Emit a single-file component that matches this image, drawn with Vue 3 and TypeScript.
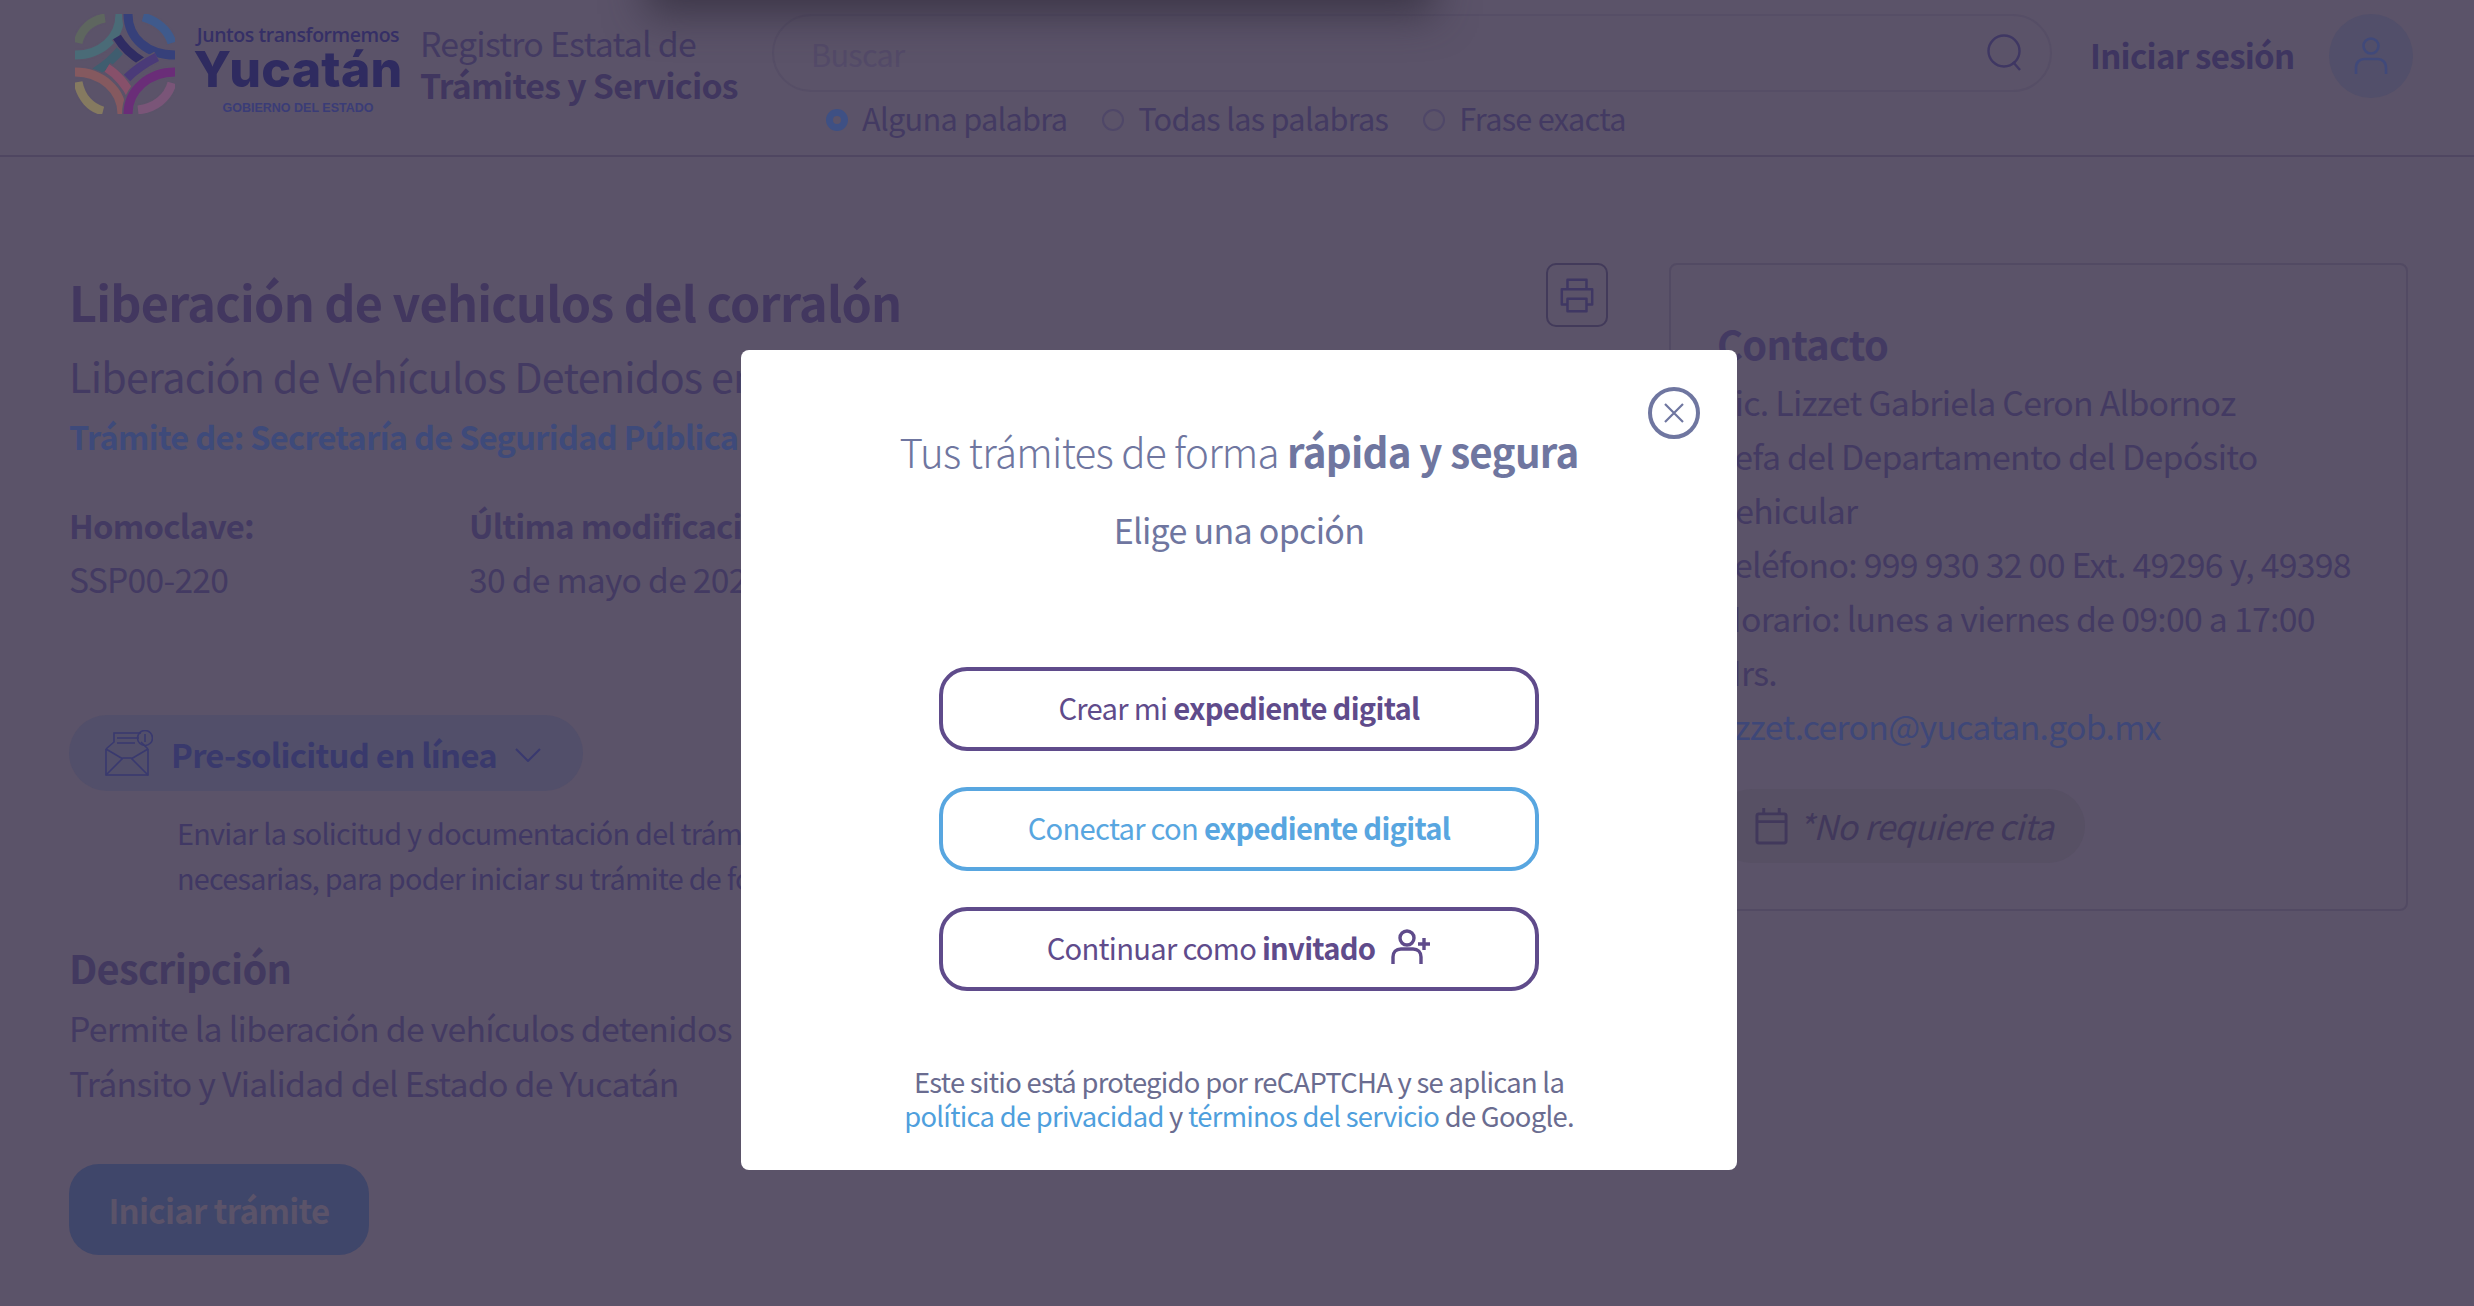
<script setup lang="ts">
interface Band { d: string; c: string }
const bands: Band[] = [
  { d: 'M3 29C6 15 17 6 30 4', c: '#5e665f' },
  { d: 'M48 33C40 43 30 52 20 58', c: '#3f5d6f' },
  { d: 'M45 0C45 24 26 41 0 41', c: '#4a6b77' },
  { d: 'M68 3C82 7 93 16 97 29', c: '#3f5a8c' },
  { d: 'M42 23C48 33 58 42 68 48', c: '#2f2c63' },
  { d: 'M53 0C53 24 72 41 100 41', c: '#36407a' },
  { d: 'M3 68C6 84 16 94 28 97', c: '#857a60' },
  { d: 'M32 54C42 60 52 72 57 83', c: '#87506a' },
  { d: 'M0 58C26 58 47 76 47 100', c: '#85595f' },
  { d: 'M63 96C80 94 93 84 97 69', c: '#7a5578' },
  { d: 'M52 64C60 56 70 49 82 43', c: '#4a3a78' },
  { d: 'M53 100C53 76 74 58 100 58', c: '#6a2d78' }
]
const radios = [
  { label: 'Alguna palabra', on: true },
  { label: 'Todas las palabras', on: false },
  { label: 'Frase exacta', on: false }
]
const contact = [
  'Lic. Lizzet Gabriela Ceron Albornoz',
  'Jefa del Departamento del Depósito Vehicular',
  'Teléfono: 999 930 32 00 Ext. 49296 y, 49398',
  'Horario: lunes a viernes de 09:00 a 17:00 Hrs.'
]
</script>

<template>
  <div class="page">
    <div class="top-shadow"></div>
    <header class="header">
      <div class="brand">
        <svg class="logo" viewBox="0 0 100 100" fill="none">
          <g v-for="b in bands" :key="b.d">
            <path :d="b.d" stroke="#5b5369" stroke-width="12" />
            <path :d="b.d" :stroke="b.c" stroke-width="9" />
          </g>
        </svg>
        <div class="wordmark">
          <span class="wm-top">Juntos transformemos</span>
          <span class="wm-main">Yucatán</span>
          <span class="wm-sub">GOBIERNO DEL ESTADO</span>
        </div>
      </div>
      <div class="registro">
        <span>Registro Estatal de</span>
        <strong>Trámites y Servicios</strong>
      </div>
      <div class="search-col">
        <div class="search">
          <span class="placeholder">Buscar</span>
          <svg class="search-icon" viewBox="0 0 36 38" fill="none" stroke="#3f3763" stroke-width="2.4">
            <circle cx="17" cy="17" r="15.5" />
            <path d="M26 28l7 8" />
          </svg>
        </div>
        <div class="radios">
          <label v-for="r in radios" :key="r.label" class="radio">
            <span class="dot" :class="{ on: r.on }"></span>{{ r.label }}
          </label>
        </div>
      </div>
      <a class="login">Iniciar sesión</a>
      <div class="avatar">
        <svg viewBox="0 0 36 40" fill="none" stroke="#40497a" stroke-width="2.6">
          <circle cx="18" cy="10" r="7.5" />
          <path d="M3 38V32C3 26 7 23 11 23H25C29 23 33 26 33 32V38" />
        </svg>
      </div>
    </header>

    <main class="content">
      <section class="main-col">
        <div class="title-row">
          <h1>Liberación de vehiculos del corralón</h1>
          <button class="print" aria-label="Imprimir">
            <svg viewBox="0 0 40 40" fill="none" stroke="#3f3763" stroke-width="2.6" stroke-linejoin="round">
              <path d="M10 14V4H30V14" />
              <path d="M10 30H4V14H36V30H30" />
              <path d="M10 24H30V37H10Z" />
            </svg>
          </button>
        </div>
        <h2 class="subtitle">Liberación de Vehículos Detenidos en el Corralón</h2>
        <p class="dep">Trámite de: Secretaría de Seguridad Pública</p>

        <div class="meta">
          <div>
            <b>Homoclave:</b>
            <span>SSP00-220</span>
          </div>
          <div>
            <b>Última modificación:</b>
            <span>30 de mayo de 2024</span>
          </div>
        </div>

        <div class="pill">
          <svg class="env" viewBox="0 0 48 46" fill="none" stroke="#39396f" stroke-width="1.6">
            <path d="M1 19V45H43V19" />
            <path d="M1 19L9 12V3H36M43 19L36 12" />
            <path d="M1 45L18 28H26L43 45M1 19L18 29M43 19L26 29" />
            <path d="M12 8H34M12 13H30" />
            <circle cx="40" cy="8" r="7.5" />
            <path d="M40 4V12" />
          </svg>
          <span class="pill-text">Pre-solicitud en línea</span>
          <svg class="chev" viewBox="0 0 26 14" fill="none" stroke="#39396f" stroke-width="2">
            <path d="M1 1l12 12L25 1" />
          </svg>
        </div>
        <p class="pill-desc">Enviar la solicitud y documentación del trámite, en caso de ser<br />necesarias, para poder iniciar su trámite de forma presencial</p>

        <h3>Descripción</h3>
        <p class="desc">Permite la liberación de vehículos detenidos por la Dirección de<br />Tránsito y Vialidad del Estado de Yucatán</p>

        <button class="start">Iniciar trámite</button>
      </section>

      <aside class="card">
        <h3>Contacto</h3>
        <p v-for="l in contact" :key="l">{{ l }}</p>
        <a class="mail">lizzet.ceron@yucatan.gob.mx</a>
        <div class="cita">
          <svg viewBox="0 0 34 38" fill="none" stroke="#41385b" stroke-width="3">
            <rect x="2" y="6" width="30" height="30" rx="2" />
            <path d="M2 14H32M9 0V6M25 0V6" />
          </svg>
          <em>*No requiere cita</em>
        </div>
      </aside>
    </main>

    <div class="overlay">
      <div class="modal" role="dialog">
        <button class="close" aria-label="Cerrar">
          <svg viewBox="0 0 24 24" fill="none" stroke="#6f76a0" stroke-width="2.2">
            <path d="M3 3l18 18M21 3L3 21" />
          </svg>
        </button>
        <h2 class="m-title">Tus trámites de forma <b>rápida y segura</b></h2>
        <p class="m-sub">Elige una opción</p>
        <div class="m-actions">
          <button class="opt">Crear mi <b>expediente digital</b></button>
          <button class="opt blue">Conectar con <b>expediente digital</b></button>
          <button class="opt">Continuar como <b>invitado</b>
            <svg class="guest" viewBox="0 0 40 36" fill="none" stroke="#5f4b8b" stroke-width="3.4">
              <circle cx="16" cy="9" r="7" />
              <path d="M2 35V28C2 23 5 20 10 20H22C27 20 30 23 30 28V35" />
              <path d="M33 9V21M27 15H39" />
            </svg>
          </button>
        </div>
        <p class="m-foot">Este sitio está protegido por reCAPTCHA y se aplican la<br /><a>política de privacidad</a> y <a>términos del servicio</a> de Google.</p>
      </div>
    </div>
  </div>
</template>

<style>
html, body { margin: 0; background: #5b5369; }
</style>

<style scoped>
.page {
  position: relative;
  width: 2474px;
  height: 1306px;
  overflow: hidden;
  background: #5b5369;
  color: #433a62;
  font-family: "Noto Sans CJK SC", "Open Sans", sans-serif;
  letter-spacing: -0.045em;
}
.top-shadow {
  position: absolute;
  left: 660px;
  top: -50px;
  width: 760px;
  height: 50px;
  box-shadow: 0 0 40px 14px rgba(50, 44, 60, 0.75);
  background: #4a4358;
}
.header {
  height: 157px;
  box-sizing: border-box;
  border-bottom: 2px solid #4f4661;
  display: flex;
  align-items: flex-start;
  padding: 14px 61px 0 75px;
}
.brand { display: flex; gap: 19px; flex: none; }
.logo { width: 100px; height: 100px; flex: none; }
.wordmark {
  display: flex;
  flex-direction: column;
  align-items: center;
  width: 208px;
  color: #2f2b60;
  padding-top: 10px;
}
.wm-top {
  font: 600 19.5px/22px "Open Sans", sans-serif;
  letter-spacing: -0.45px;
  color: #352f66;
  white-space: nowrap;
}
.wm-main {
  font: 800 50px/46px Inter, sans-serif;
  letter-spacing: 0.2px;
  white-space: nowrap;
  height: 48px;
}
.wm-sub {
  font: 700 12.5px/14px "Liberation Sans", sans-serif;
  letter-spacing: 0;
  color: #3a3c77;
  margin-top: 7px;
  white-space: nowrap;
}
.registro {
  margin-left: 18px;
  padding-top: 8px;
  display: flex;
  flex-direction: column;
  font-size: 33.8px;
  line-height: 42px;
  white-space: nowrap;
  width: 352px;
  flex: none;
}
.registro strong { font-weight: 700; color: #40365f; }
.search-col { width: 1280px; flex: none; }
.search {
  box-sizing: border-box;
  height: 78px;
  border: 2px solid #564e66;
  border-radius: 39px;
  display: flex;
  align-items: center;
  justify-content: space-between;
  padding: 0 27px 0 37px;
}
.placeholder { font-size: 30.7px; color: #534a68; }
.search-icon { width: 36px; height: 38px; }
.radios {
  display: flex;
  gap: 35px;
  padding: 4px 0 0 54px;
}
.radio {
  display: flex;
  align-items: center;
  gap: 14px;
  font-size: 30.7px;
  line-height: 44px;
  white-space: nowrap;
}
.dot {
  width: 22px;
  height: 22px;
  margin-top: 4px;
  box-sizing: border-box;
  border: 2px solid #4f4768;
  border-radius: 50%;
}
.dot.on { border: 7px solid #3e5084; background: #5b5369; }
.login {
  font-size: 33px;
  font-weight: 700;
  line-height: 50px;
  margin: 16px 0 0 38px;
  white-space: nowrap;
  color: #3e3560;
}
.avatar {
  width: 84px;
  height: 84px;
  flex: none;
  margin-left: auto;
  border-radius: 50%;
  background: #524f6a;
  display: flex;
  align-items: center;
  justify-content: center;
}
.avatar svg { width: 36px; height: 40px; }
.content {
  display: grid;
  grid-template-columns: 1539px 739px;
  column-gap: 61px;
  padding: 106px 0 0 69px;
}
.main-col { min-width: 0; overflow: hidden; }
.title-row { display: flex; justify-content: space-between; align-items: flex-start; height: 83px; }
h1 {
  margin: 7px 0 0;
  font-size: 48.5px;
  line-height: 62px;
  font-weight: 700;
  color: #42375f;
  white-space: nowrap;
}
.print {
  width: 62px;
  height: 64px;
  padding: 0;
  border: 2px solid #423a5a;
  border-radius: 10px;
  background: transparent;
  display: flex;
  align-items: center;
  justify-content: center;
}
.print svg { width: 38px; height: 38px; }
.subtitle {
  margin: 0;
  font-size: 41.2px;
  font-weight: 400;
  line-height: 58px;
  white-space: nowrap;
}
.dep {
  margin: 4px 0 0;
  font-size: 32.6px;
  line-height: 56px;
  font-weight: 700;
  color: #3e4a7a;
  white-space: nowrap;
}
.meta {
  display: flex;
  margin-top: 34px;
  font-size: 33.6px;
  line-height: 54px;
  white-space: nowrap;
}
.meta b { font-size: 32.7px; }
.meta > div { display: flex; flex-direction: column; width: 400px; }
.pill {
  margin-top: 109px;
  width: 514px;
  height: 76px;
  box-sizing: border-box;
  border-radius: 38px;
  background: #524f6a;
  display: flex;
  align-items: center;
  padding-left: 36px;
}
.env { width: 48px; height: 46px; flex: none; }
.pill-text {
  margin-left: 18px;
  font-size: 32.8px;
  font-weight: 700;
  color: #39396c;
  white-space: nowrap;
}
.chev { width: 26px; height: 14px; margin: 4px 0 0 18px; flex: none; }
.pill-desc {
  margin: 19px 0 0 108px;
  white-space: nowrap;
  font-size: 28.8px;
  line-height: 45px;
  color: #403864;
}
h3 {
  margin: 37px 0 0;
  font-size: 39.7px;
  line-height: 60px;
  font-weight: 700;
  color: #42395f;
}
.desc {
  margin: 3px 0 0;
  font-size: 33.8px;
  line-height: 55px;
  white-space: nowrap;
}
.start {
  display: block;
  margin-top: 54px;
  width: 300px;
  height: 91px;
  border: none;
  border-radius: 30px;
  background: #3f466a;
  color: #5b5369;
  font: 700 33px "Noto Sans CJK SC", sans-serif;
  letter-spacing: inherit;
}
.card {
  box-sizing: border-box;
  height: 648px;
  border: 2px solid #524a63;
  border-radius: 8px;
  padding: 48px 30px 0 46px;
  font-size: 33.8px;
  line-height: 54px;
}
.card h3 { margin: 0 0 2px; color: #433a62; }
.card p { margin: 0; }
.mail { display: block; color: #3e4778; }
.cita {
  margin-top: 36px;
  margin-left: -2px;
  width: 370px;
  height: 74px;
  box-sizing: border-box;
  border-radius: 37px;
  background: #575064;
  display: flex;
  align-items: center;
  padding-left: 40px;
  gap: 10px;
  color: #41385b;
}
.cita svg { width: 33px; height: 37px; flex: none; }
.cita em { font-size: 34px; white-space: nowrap; }
.overlay {
  position: absolute;
  inset: 0;
  display: flex;
  justify-content: center;
  align-items: flex-start;
  padding: 350px 0 0 4px;
}
.modal {
  position: relative;
  box-sizing: border-box;
  width: 996px;
  height: 820px;
  background: #fff;
  border-radius: 8px;
  text-align: center;
  color: #6f76a0;
  padding-top: 70px;
}
.close {
  position: absolute;
  right: 37px;
  top: 37px;
  width: 52px;
  height: 52px;
  padding: 12px;
  box-sizing: border-box;
  border: 4px solid #6f76a0;
  border-radius: 50%;
  background: #fff;
  display: flex;
  align-items: center;
  justify-content: center;
}
.close svg { width: 24px; height: 24px; flex: none; }
.m-title {
  margin: 0;
  font-size: 40.3px;
  line-height: 62px;
  font-weight: 300;
}
.m-title b { font-weight: 700; }
.m-sub {
  margin: 23px 0 0;
  font-size: 34px;
  line-height: 50px;
}
.m-actions {
  margin-top: 112px;
  display: flex;
  flex-direction: column;
  align-items: center;
  gap: 36px;
}
.opt {
  width: 600px;
  height: 84px;
  box-sizing: border-box;
  border: 4px solid #5f4b8b;
  border-radius: 28px;
  background: #fff;
  color: #5f4b8b;
  font: 400 29.2px/40px "Noto Sans CJK SC", sans-serif;
  letter-spacing: inherit;
  display: flex;
  align-items: center;
  justify-content: center;
  white-space: pre;
  padding: 0 0 4px;
}
.opt b { font-weight: 700; }
.opt.blue { border-color: #58a6e0; color: #58a6e0; }
.guest { width: 40px; height: 36px; margin-left: 16px; }
.m-foot {
  margin: 73px 0 0;
  font-size: 27.4px;
  line-height: 34px;
  color: #6a6c90;
}
.m-foot a { color: #4f9fdd; }
</style>
